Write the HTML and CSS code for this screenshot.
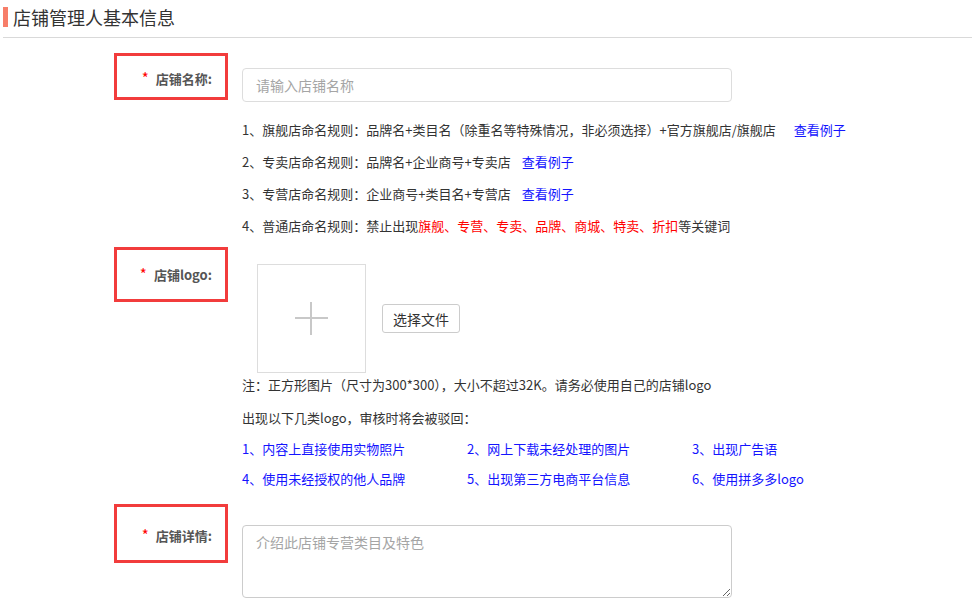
FILE: index.html
```html
<!DOCTYPE html>
<html lang="zh-CN">
<head>
<meta charset="utf-8">
<title>店铺管理人基本信息</title>
<link rel="stylesheet" href="styles.css">
</head>
<body>
<div class="page">
  <div class="section-head">
    <span class="bar"></span>
    <h2 class="section-title">店铺管理人基本信息</h2>
  </div>

  <div class="form">
    <div class="row row-name">
      <div class="label label-name"><span class="req">*</span>店铺名称:</div>
      <div class="field field-name">
        <input class="text-input" type="text" placeholder="请输入店铺名称">
        <ul class="rules">
          <li>1、旗舰店命名规则：品牌名+类目名（除重名等特殊情况，非必须选择）+官方旗舰店/旗舰店<a class="example example-wide">查看例子</a></li>
          <li>2、专卖店命名规则：品牌名+企业商号+专卖店<a class="example">查看例子</a></li>
          <li>3、专营店命名规则：企业商号+类目名+专营店<a class="example">查看例子</a></li>
          <li>4、普通店命名规则：禁止出现<span class="warn">旗舰、专营、专卖、品牌、商城、特卖、折扣</span>等关键词</li>
        </ul>
      </div>
    </div>

    <div class="row row-logo">
      <div class="label label-logo"><span class="req">*</span>店铺logo:</div>
      <div class="field field-logo">
        <div class="upload">
          <div class="upload-box"><span class="plus"></span></div>
          <button class="file-btn" type="button">选择文件</button>
        </div>
        <p class="note">注：正方形图片（尺寸为300*300），大小不超过32K。请务必使用自己的店铺logo</p>
        <p class="note note-reject">出现以下几类logo，审核时将会被驳回：</p>
        <ul class="reject-list">
          <li>1、内容上直接使用实物照片</li>
          <li>2、网上下载未经处理的图片</li>
          <li>3、出现广告语</li>
          <li>4、使用未经授权的他人品牌</li>
          <li>5、出现第三方电商平台信息</li>
          <li>6、使用拼多多logo</li>
        </ul>
      </div>
    </div>

    <div class="row row-detail">
      <div class="label label-detail"><span class="req">*</span>店铺详情:</div>
      <div class="field field-detail">
        <textarea class="text-area" placeholder="介绍此店铺专营类目及特色"></textarea>
      </div>
    </div>
  </div>
</div>
</body>
</html>
```

FILE: styles.css
```css
* { box-sizing: border-box; }

html, body {
  margin: 0;
  padding: 0;
  background: #fff;
}

body {
  font-family: "Noto Sans CJK SC", "Microsoft YaHei", sans-serif;
  font-size: 13px;
  color: #333;
}

.page {
  width: 972px;
  padding-left: 3px;
}

.section-head {
  display: flex;
  align-items: center;
  gap: 5px;
  padding-top: 7px;
  padding-bottom: 10px;
  border-bottom: 1px solid #d9d9d9;
}

.bar {
  width: 5px;
  height: 20px;
  background: #f77e69;
}

.section-title {
  margin: 0;
  font-size: 18px;
  line-height: 20px;
  font-weight: normal;
  color: #333;
}

.form {
  padding-left: 111px;
}

.row {
  display: flex;
  align-items: flex-start;
}

.row-name { margin-top: 15px; }
.row-logo { margin-top: 5px; }
.row-detail { margin-top: 10px; }

.label {
  width: 114px;
  flex: none;
  border: 3px solid #f23c3c;
  padding-right: 13px;
  text-align: right;
  font-weight: bold;
  font-size: 13px;
  line-height: 20px;
  color: #555;
}

.label-name { height: 47px; padding-top: 12px; }
.label-logo { height: 55px; padding-top: 14px; }
.label-detail { height: 59px; padding-top: 18px; }

.req {
  color: #f00;
  font-weight: normal;
  font-size: 15px;
  margin-right: 7px;
}

.field {
  margin-left: 14px;
  flex: 1;
}

.field-name { margin-top: 15px; }
.field-logo { margin-top: 17px; }
.field-detail { margin-top: 21px; }

.text-input {
  display: block;
  width: 490px;
  height: 34px;
  border: 1px solid #ddd;
  border-radius: 4px;
  padding: 0 13px;
  font-family: inherit;
  font-size: 14px;
  color: #333;
  outline: none;
}

.text-input::placeholder,
.text-area::placeholder {
  color: #a5a5a5;
}

.rules {
  list-style: none;
  margin: 12px 0 0;
  padding: 0;
}

.rules li {
  line-height: 32px;
  height: 32px;
  white-space: nowrap;
  color: #333;
}

.example {
  color: #1414ff;
  margin-left: 11px;
  cursor: pointer;
}

.example-wide { margin-left: 18px; }

.warn { color: #f00; }

.upload {
  display: flex;
  align-items: center;
  margin-left: 15px;
}

.upload-box {
  width: 109px;
  height: 109px;
  border: 1px solid #ddd;
  display: flex;
  align-items: center;
  justify-content: center;
}

.plus {
  width: 33px;
  height: 33px;
  position: relative;
}

.plus::before,
.plus::after {
  content: "";
  position: absolute;
  background: #c8c8c8;
}

.plus::before {
  left: 0;
  right: 0;
  top: 15px;
  height: 2px;
}

.plus::after {
  top: 0;
  bottom: 0;
  left: 15px;
  width: 2px;
}

.file-btn {
  margin-left: 16px;
  width: 78px;
  height: 29px;
  border: 1px solid #ccc;
  border-radius: 3px;
  background: #fff;
  font-family: inherit;
  font-size: 14px;
  color: #333;
  padding: 0;
}

.note {
  margin: 0;
  line-height: 24px;
  color: #333;
}

.note-reject { margin-top: 9px; }

.reject-list {
  list-style: none;
  margin: 4px 0 0;
  padding: 0;
  display: grid;
  grid-template-columns: 225px 225px 225px;
}

.reject-list li {
  line-height: 30px;
  color: #1414ff;
  white-space: nowrap;
}

.text-area {
  display: block;
  width: 490px;
  height: 73px;
  border: 1px solid #ccc;
  border-radius: 4px;
  padding: 6px 13px;
  font-family: inherit;
  font-size: 14px;
  line-height: 20px;
  color: #333;
  outline: none;
  resize: both;
}
```
